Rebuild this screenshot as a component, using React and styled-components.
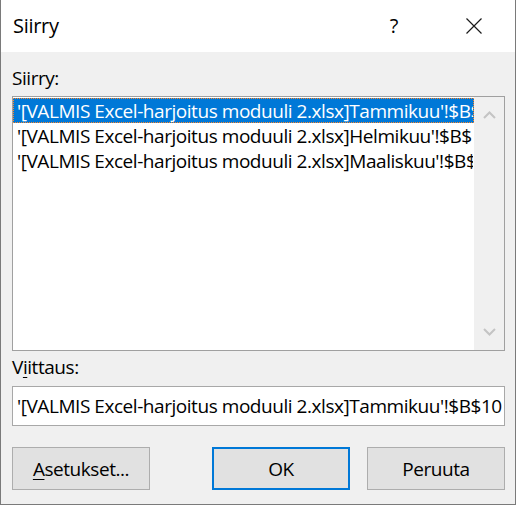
import styled, { createGlobalStyle } from 'styled-components';

const GlobalStyle = createGlobalStyle`
  html, body {
    margin: 0;
    padding: 0;
    background: #ffffff;
  }
  body {
    font-family: "Open Sans", "Noto Sans", "Liberation Sans", sans-serif;
    color: #000000;
  }
`;

const targets = [
  "'[VALMIS Excel-harjoitus moduuli 2.xlsx]Tammikuu'!$B$10",
  "'[VALMIS Excel-harjoitus moduuli 2.xlsx]Helmikuu'!$B$10",
  "'[VALMIS Excel-harjoitus moduuli 2.xlsx]Maaliskuu'!$B$10",
];

const ChevronUp = () => (
  <svg width="13" height="8" viewBox="0 0 13 8">
    <path d="M1 7 L6.5 1.5 L12 7" fill="none" stroke="#c4c4c4" strokeWidth="2" />
  </svg>
);

const ChevronDown = () => (
  <svg width="13" height="8" viewBox="0 0 13 8">
    <path d="M1 1 L6.5 6.5 L12 1" fill="none" stroke="#c4c4c4" strokeWidth="2" />
  </svg>
);

const CloseIcon = () => (
  <svg width="16" height="16" viewBox="0 0 16 16">
    <path d="M0.5 0.5 L15.5 15.5 M15.5 0.5 L0.5 15.5" stroke="#1a1a1a" strokeWidth="1.2" />
  </svg>
);

const App = () => {
  return (
    <>
      <GlobalStyle />
      <Dialog>
        <TitleBar>
          <Title>Siirry</Title>
          <HelpButton>?</HelpButton>
          <CloseButton>
            <CloseIcon />
          </CloseButton>
        </TitleBar>
        <Body>
          <Label>Siirry:</Label>
          <ListBox>
            <ListItems>
              {targets.map((t, i) => (
                <ListItem key={t} $selected={i === 0}>{t}</ListItem>
              ))}
            </ListItems>
            <ScrollBar>
              <ChevronUp />
              <ChevronDown />
            </ScrollBar>
          </ListBox>
          <Label $gap>
            V<u>i</u>ittaus:
          </Label>
          <Field>{targets[0]}</Field>
          <ButtonRow>
            <Button>
              <u>A</u>setukset...
            </Button>
            <Button $primary>OK</Button>
            <Button>Peruuta</Button>
          </ButtonRow>
        </Body>
      </Dialog>
    </>
  );
};

export default App;

const Dialog = styled.div`
  width: 516px;
  height: 505px;
  box-sizing: border-box;
  border: 1px solid #7a7a7a;
  border-top: none;
  display: flex;
  flex-direction: column;
  overflow: hidden;
`;

const TitleBar = styled.div`
  height: 52px;
  flex: 0 0 52px;
  background: #ffffff;
  display: flex;
  align-items: center;
  padding-left: 12px;
  font-size: 20px;
  letter-spacing: -0.3px;
`;

const Title = styled.div`
  flex: 1;
  margin-top: -1px;
`;

const HelpButton = styled.div`
  width: 20px;
  text-align: center;
  margin-right: 62px;
  margin-top: -1px;
`;

const CloseButton = styled.div`
  width: 16px;
  height: 16px;
  margin-right: 33px;
  display: flex;
`;

const Body = styled.div`
  flex: 1;
  background: #f0f0f0;
  padding: 12px 10px 0 11px;
  display: flex;
  flex-direction: column;
  font-size: 19px;
  letter-spacing: -0.45px;
`;

const Label = styled.div`
  line-height: 28px;
  height: 28px;
  margin-top: ${p => (p.$gap ? '2px' : '0')};
  margin-bottom: ${p => (p.$gap ? '5px' : '4px')};
  u {
    text-underline-offset: 3px;
  }
`;

const ListBox = styled.div`
  height: 255px;
  box-sizing: border-box;
  border: 1px solid #a0a0a0;
  background: #ffffff;
  display: flex;
`;

const ListItems = styled.div`
  flex: 1;
  min-width: 0;
  overflow: hidden;
  padding-top: 1px;
`;

const ListItem = styled.div`
  height: 25px;
  box-sizing: border-box;
  padding-left: 3px;
  white-space: nowrap;
  overflow: hidden;
  background: ${p => (p.$selected ? '#0078d7' : 'transparent')};
  color: ${p => (p.$selected ? '#ffffff' : '#000000')};
  border: 1px dotted ${p => (p.$selected ? '#ff8728' : 'transparent')};
  line-height: 24px;
`;

const ScrollBar = styled.div`
  width: 30px;
  flex: 0 0 30px;
  background: #f0f0f0;
  display: flex;
  flex-direction: column;
  justify-content: space-between;
  align-items: center;
  padding: 14px 0 14px;
  box-sizing: border-box;
`;

const Field = styled.div`
  height: 40px;
  box-sizing: border-box;
  border: 1px solid #a8a8a8;
  background: #ffffff;
  padding-left: 4px;
  line-height: 38px;
  white-space: nowrap;
  overflow: hidden;
`;

const ButtonRow = styled.div`
  display: flex;
  margin-top: 21px;
  & > :nth-child(2) {
    margin-left: auto;
    margin-right: 17px;
  }
`;

const Button = styled.div`
  width: 138px;
  height: 43px;
  box-sizing: border-box;
  background: #e1e1e1;
  border: ${p => (p.$primary ? '2px solid #0078d7' : '1px solid #adadad')};
  display: flex;
  align-items: center;
  justify-content: center;
  u {
    text-underline-offset: 3px;
  }
`;
